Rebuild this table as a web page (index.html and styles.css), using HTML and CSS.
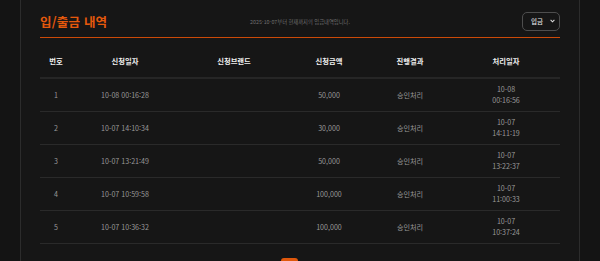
FILE: index.html
```html
<!DOCTYPE html>
<html lang="ko">
<head>
<meta charset="utf-8">
<link rel="stylesheet" href="styles.css">
</head>
<body>
<div class="frame">
  <div class="panel">
    <div class="head">
      <h1 class="title">입/출금 내역</h1>
      <p class="desc">2025-10-07부터 현재까지의 입금내역입니다.</p>
      <div class="select-wrap">
        <div class="select">
          <span>입금</span>
          <svg class="chev" width="5" height="4" viewBox="0 0 5 4"><path d="M0.6 0.9 L2.5 2.8 L4.4 0.9" fill="none" stroke="#ddd" stroke-width="1.1"/></svg>
        </div>
      </div>
    </div>
    <table class="list">
      <colgroup>
        <col class="c1"><col class="c2"><col class="c3"><col class="c4"><col class="c5"><col class="c6">
      </colgroup>
      <thead>
        <tr><th>번호</th><th>신청일자</th><th>신청브랜드</th><th>신청금액</th><th>진행결과</th><th>처리일자</th></tr>
      </thead>
      <tbody>
        <tr><td>1</td><td>10-08 00:16:28</td><td></td><td>50,000</td><td>승인처리</td><td class="two">10-08<br>00:16:56</td></tr>
        <tr><td>2</td><td>10-07 14:10:34</td><td></td><td>30,000</td><td>승인처리</td><td class="two">10-07<br>14:11:19</td></tr>
        <tr><td>3</td><td>10-07 13:21:49</td><td></td><td>50,000</td><td>승인처리</td><td class="two">10-07<br>13:22:37</td></tr>
        <tr><td>4</td><td>10-07 10:59:58</td><td></td><td>100,000</td><td>승인처리</td><td class="two">10-07<br>11:00:33</td></tr>
        <tr><td>5</td><td>10-07 10:36:32</td><td></td><td>100,000</td><td>승인처리</td><td class="two">10-07<br>10:37:24</td></tr>
      </tbody>
    </table>
    <div class="pager"><span class="page on">1</span></div>
  </div>
</div>
</body>
</html>
```
FILE: styles.css
```css
html, body {
  margin: 0;
  padding: 0;
  background: #141414;
  font-family: "Noto Sans CJK KR", "Noto Sans", sans-serif;
  height: 100%;
  overflow: hidden;
}
.frame {
  margin: 0 20px;
  min-height: 100%;
  border-left: 1px solid #2c2c2c;
  border-right: 1px solid #2c2c2c;
  background: #161616;
}
.panel {
  padding: 0 19px;
}
.head {
  display: grid;
  grid-template-columns: 1fr auto 1fr;
  align-items: center;
  height: 38px;
  box-sizing: border-box;
  padding-top: 5px;
  border-bottom: 1px solid #cc4a08;
}
.title {
  margin: 0;
  font-size: 12.5px;
  font-weight: 700;
  color: #e5590c;
  line-height: 19px;
  letter-spacing: 0.2px;
}
.desc {
  margin: 0;
  font-size: 5.3px;
  color: #6f6f6f;
  line-height: 8px;
  padding-top: 1px;
}
.select-wrap {
  display: flex;
  justify-content: flex-end;
}
.select {
  width: 38px;
  height: 19px;
  box-sizing: border-box;
  border: 1px solid #4e4e4e;
  border-radius: 5px;
  display: flex;
  align-items: center;
  justify-content: space-between;
  padding: 0 4px 0 8px;
  color: #e6e6e6;
  font-size: 6.5px;
  font-weight: 500;
}
.chev {
  display: block;
}
.list {
  width: 100%;
  border-collapse: collapse;
  table-layout: fixed;
  margin-top: 7px;
}
.c1 { width: 32px; }
.c2 { width: 106px; }
.c3 { width: 112px; }
.c4 { width: 78px; }
.c5 { width: 84px; }
.c6 { width: 108px; }
.list th {
  height: 32px;
  padding: 0;
  font-size: 7.3px;
  font-weight: 700;
  color: #f0f0f0;
  text-align: center;
  border-bottom: 2px solid #262626;
}
.list td {
  height: 32px;
  padding: 0;
  font-size: 7.1px;
  color: #989898;
  text-align: center;
  border-bottom: 1px solid #2a2a2a;
  line-height: 11px;
}
.list td.two {
  line-height: 11.5px;
}
.pager {
  display: flex;
  justify-content: center;
  padding-right: 22px;
  margin-top: 14px;
}
.page {
  width: 17px;
  height: 17px;
  border-radius: 3px;
  font-size: 7px;
  line-height: 17px;
  text-align: center;
  color: #fff;
}
.page.on {
  background: #e0580c;
}
```
